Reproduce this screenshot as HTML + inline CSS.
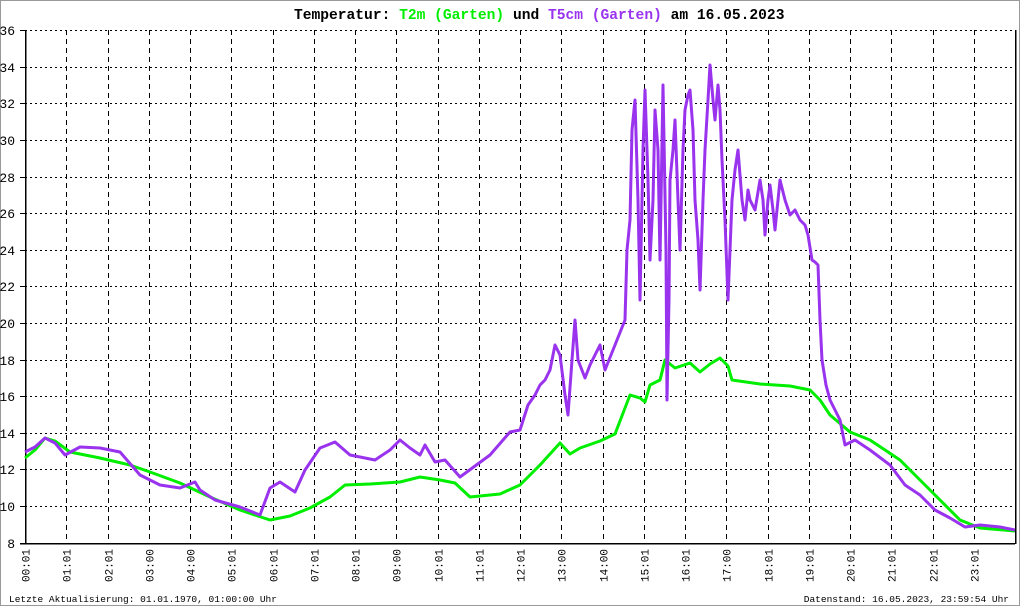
<!DOCTYPE html>
<html><head><meta charset="utf-8"><style>
html,body{margin:0;padding:0;background:#fff}
svg{display:block}
text{font-family:"Liberation Mono",monospace}
</style></head><body>
<svg width="1020" height="606" viewBox="0 0 1020 606" xmlns="http://www.w3.org/2000/svg">
<rect x="0.5" y="0.5" width="1019" height="605" fill="#fff" stroke="#999"/>
<g stroke="#000" stroke-width="1" stroke-dasharray="2,3" shape-rendering="crispEdges">
<!-- horizontal grid -->
<line x1="25" y1="30.5" x2="1015" y2="30.5"/><line x1="25" y1="67.5" x2="1015" y2="67.5"/>
<line x1="25" y1="103.5" x2="1015" y2="103.5"/><line x1="25" y1="140.5" x2="1015" y2="140.5"/>
<line x1="25" y1="177.5" x2="1015" y2="177.5"/><line x1="25" y1="213.5" x2="1015" y2="213.5"/>
<line x1="25" y1="250.5" x2="1015" y2="250.5"/><line x1="25" y1="286.5" x2="1015" y2="286.5"/>
<line x1="25" y1="323.5" x2="1015" y2="323.5"/><line x1="25" y1="360.5" x2="1015" y2="360.5"/>
<line x1="25" y1="396.5" x2="1015" y2="396.5"/><line x1="25" y1="433.5" x2="1015" y2="433.5"/>
<line x1="25" y1="469.5" x2="1015" y2="469.5"/><line x1="25" y1="506.5" x2="1015" y2="506.5"/>
</g>
<g stroke="#000" stroke-width="1" stroke-dasharray="5,4" shape-rendering="crispEdges" id="vg"></g>
<g stroke="#000" stroke-width="1.5" fill="none" shape-rendering="crispEdges">
<line x1="25.5" y1="30" x2="25.5" y2="544"/>
<line x1="20" y1="543.5" x2="1015" y2="543.5"/>
<line x1="1015.5" y1="30" x2="1015.5" y2="544"/>
</g>
<g stroke="#000" stroke-width="1" shape-rendering="crispEdges">
<line x1="20" y1="30.5" x2="25" y2="30.5"/><line x1="20" y1="67.5" x2="25" y2="67.5"/>
<line x1="20" y1="103.5" x2="25" y2="103.5"/><line x1="20" y1="140.5" x2="25" y2="140.5"/>
<line x1="20" y1="177.5" x2="25" y2="177.5"/><line x1="20" y1="213.5" x2="25" y2="213.5"/>
<line x1="20" y1="250.5" x2="25" y2="250.5"/><line x1="20" y1="286.5" x2="25" y2="286.5"/>
<line x1="20" y1="323.5" x2="25" y2="323.5"/><line x1="20" y1="360.5" x2="25" y2="360.5"/>
<line x1="20" y1="396.5" x2="25" y2="396.5"/><line x1="20" y1="433.5" x2="25" y2="433.5"/>
<line x1="20" y1="469.5" x2="25" y2="469.5"/><line x1="20" y1="506.5" x2="25" y2="506.5"/>
</g>
<g font-size="13" fill="#000" text-anchor="end">
<text x="15" y="35">36</text><text x="15" y="72">34</text><text x="15" y="108">32</text>
<text x="15" y="145">30</text><text x="15" y="182">28</text><text x="15" y="218">26</text>
<text x="15" y="255">24</text><text x="15" y="291">22</text><text x="15" y="328">20</text>
<text x="15" y="365">18</text><text x="15" y="401">16</text><text x="15" y="438">14</text>
<text x="15" y="474">12</text><text x="15" y="511">10</text><text x="15" y="548">8</text>
</g>
<g id="xl" font-size="11" fill="#000"></g>
<polyline fill="none" stroke="#00ee00" stroke-width="3" stroke-linejoin="round" points="25,458 35,450 45,438 55,441 70,452 100,458 130,465 150,472 180,483 210,497 240,510 270,520 290,516 310,508 330,497 345,485 370,484 400,482 420,477 440,480 455,483 470,497 500,494 520,485 540,465 560,443 570,454 580,448 600,441 615,434 630,395 640,398 645,402 650,385 660,380 665,360 675,368 690,363 700,372 710,364 720,358 728,366 732,380 760,384 790,386 810,390 820,400 830,415 850,432 870,440 900,460 930,490 960,520 980,528 1015,531"/>
<polyline fill="none" stroke="#9933ee" stroke-width="3" stroke-linejoin="round" points="25,452 35,447 45,438 55,443 65,455 80,447 100,448 120,452 140,475 160,485 180,488 195,482 200,490 215,500 240,507 260,515 270,488 280,482 295,492 305,470 320,448 335,442 350,455 375,460 390,450 400,440 410,448 420,455 425,445 435,462 445,460 460,477 475,466 490,455 510,432 520,430 528,405 535,395 540,385 545,380 550,370 555,345 560,355 565,395 568,415 572,360 575,320 578,360 585,378 590,365 600,345 605,370 615,345 625,320 627,250 630,220 632,130 635,100 638,200 640,300 643,150 645,90 648,180 650,260 653,200 655,110 658,150 660,260 663,85 666,250 667,400 669,300 670,180 673,150 675,120 678,200 680,250 683,150 685,110 688,95 690,90 693,130 695,200 698,240 700,290 703,200 705,150 708,100 710,65 713,100 715,120 718,85 720,110 722,160 725,220 728,300 730,250 732,200 735,170 738,150 742,200 745,220 748,190 750,200 755,210 760,180 763,200 765,235 768,200 770,185 773,210 775,230 778,200 780,180 785,200 790,215 795,210 800,220 805,225 808,235 812,260 815,262 818,265 820,320 822,360 826,385 830,400 835,410 840,420 845,445 855,440 870,450 890,465 905,485 920,495 935,510 950,518 965,527 980,525 1000,527 1015,530"/>
<text x="294" y="19" font-size="14.6" font-weight="bold" fill="#000" xml:space="preserve">Temperatur: <tspan fill="#00ee00">T2m (Garten)</tspan> und <tspan fill="#9933ee">T5cm (Garten)</tspan> am 16.05.2023</text>
<text x="9" y="602" font-size="9.5" fill="#000">Letzte Aktualisierung: 01.01.1970, 01:00:00 Uhr</text>
<text x="1009" y="602" font-size="9.5" fill="#000" text-anchor="end">Datenstand: 16.05.2023, 23:59:54 Uhr</text>
<script>
var vg=document.getElementById('vg'),xl=document.getElementById('xl'),ns='http://www.w3.org/2000/svg';
var labels=["00:01","01:01","02:01","03:00","04:00","05:01","06:01","07:01","08:01","09:00","10:01","11:01","12:01","13:00","14:00","15:01","16:01","17:00","18:01","19:01","20:01","21:01","22:01","23:01"];
for(var i=0;i<24;i++){var x=Math.round(25+i*41.25)+0.5;
if(i>0){var l=document.createElementNS(ns,'line');l.setAttribute('x1',x);l.setAttribute('x2',x);l.setAttribute('y1',30);l.setAttribute('y2',543);vg.appendChild(l);}
var t=document.createElementNS(ns,'text');t.setAttribute('transform','translate('+(x+4)+',582) rotate(-90)');t.textContent=labels[i];xl.appendChild(t);}
</script>
</svg>
</body></html>
